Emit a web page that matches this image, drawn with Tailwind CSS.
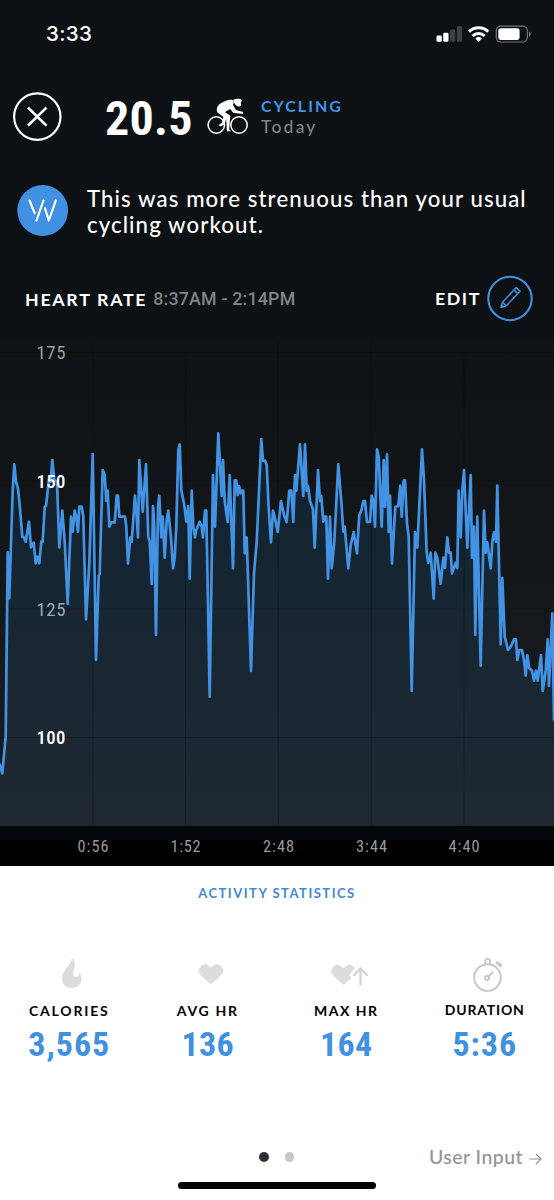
<!DOCTYPE html>
<html lang="en">
<head>
<meta charset="utf-8">
<title>Cycling activity</title>
<script src="https://cdn.jsdelivr.net/npm/@tailwindcss/browser@4"></script>
</head>
<body class="bg-white">
<div class="relative flex h-[1200px] w-[554px] flex-col overflow-hidden font-['Lato',sans-serif]">

  <section class="flex h-[866px] flex-col bg-[#0d1114] text-white">
    <!-- Status bar -->
    <div class="flex h-[67px] items-center justify-between pl-[46px] pr-[23px]">
      <span class="mt-[1px] font-['Inter',sans-serif] text-[20.5px] font-medium leading-none tracking-[0.4px]">3:33</span>
      <svg class="h-[20px] w-[96px]" viewBox="0 0 96 20" fill="#fff">
        <rect x="1.5" y="11.5" width="5.3" height="6.2" rx="1.2"/>
        <rect x="8.2" y="8.8" width="5.3" height="8.9" rx="1.2"/>
        <rect x="15" y="5.6" width="5.3" height="12.1" rx="1.2" fill="#3d4043"/>
        <rect x="21.8" y="2.2" width="5.3" height="15.5" rx="1.2" fill="#3d4043"/>
        <path d="M43.6 17.9l-3.3-3.5a4.8 4.8 0 0 1 6.600 0z"/>
        <path d="M37.600 12a8.600 8.600 0 0 1 12 0M33.900 7.600a14 14 0 0 1 19.400 0" fill="none" stroke="#fff" stroke-width="3"/>
        <rect x="61.300" y="2.200" width="31" height="15.800" rx="4.200" fill="none" stroke="#76797b" stroke-width="1.200"/>
        <rect x="63.300" y="4.200" width="21.300" height="11.800" rx="2.400"/>
        <path d="M94 7.400c2.200.8 2.200 4.600 0 5.400z" fill="#76797b"/>
      </svg>
    </div>

    <!-- Strain score and activity -->
    <div class="flex h-[98px] items-center pl-[13px]">
      <svg class="h-[49px] w-[49px]" viewBox="0 0 49 49" fill="none" stroke="#fff">
        <circle cx="24.300" cy="24.600" r="23.200" stroke-width="2.200"/>
        <path d="M15 15.600l18.500 18M33.500 15.600l-18.500 18" stroke-width="2.700"/>
      </svg>
      <span class="ml-[43px] mt-[5px] w-[88px] font-['Roboto_Condensed',sans-serif] text-[48px] font-bold leading-none tracking-[0.3px]">20.5</span>
      <svg class="ml-[14px] mt-[1px] h-[38px] w-[42px]" viewBox="0 0 42 38" fill="#fff">
        <g fill="none" stroke="#fff" stroke-width="1.500">
          <circle cx="9.300" cy="27" r="8.200"/><circle cx="32" cy="27" r="8.200"/>
        </g>
        <path d="M26 2c3-1.800 7-1.600 8.800.2l-1 3.300.3 2c-.9 1.300-2.600 1.400-3.900.6-1.700-1-3.300-3-4.200-6.100z"/>
        <path d="M25.400 1.900C21.500 1.200 14.500 4 11.400 7.300c-2 2.200-2 5.200-1 7.200l6 4.200-1.300 6.100-3.600 2.500 2.300 1.100 3.800-2.500 2.500-7.300c.3-2-.5-3.400-2.500-4.400l5.600-3.300 3 3.900 9.600 1.300.4-2-7.300-2-3-5.600c1-1.200 1.500-2.600-.5-4.600z"/>
        <path d="M15.500 13l6.700 3.800c1.300 1 1 2.600.8 4l-.8 10.700 1.900 1.800h-4.200l-.7-12.500-4.600-3.300z"/>
      </svg>
      <div class="ml-[12px] flex flex-col">
        <span class="text-[16px] font-bold leading-[21px] tracking-[2px] text-[#4393e4]">CYCLING</span>
        <span class="text-[17.500px] font-medium leading-[21px] tracking-[2.200px] text-[#808386]">Today</span>
      </div>
    </div>

    <!-- Insight -->
    <div class="flex h-[90px] items-center pl-[17px]">
      <svg class="h-[54px] w-[52px]" viewBox="0 0 52 54">
        <circle cx="25.700" cy="27.500" r="25.400" fill="#4191e2"/>
        <path d="M12.500 17.500l5.200 12.500M26.500 17.500l-7 20M28 25.300l3.800 12.200 7-20" fill="none" stroke="#fff" stroke-width="2.200" stroke-linecap="round" stroke-linejoin="round"/>
      </svg>
      <p class="ml-[18px] mt-[3px] w-[460px] text-[22.200px] font-medium leading-[26px] tracking-[1.100px]">This was more strenuous than your usual<br>cycling workout.</p>
    </div>

    <!-- Heart rate heading -->
    <div class="flex h-[86px] items-center pl-[25px] pr-[21px]">
      <span class="mt-[2px] text-[17.800px] font-bold tracking-[1.700px]">HEART RATE</span>
      <span class="ml-[6px] mt-[2px] font-['Roboto',sans-serif] text-[17.800px] font-medium tracking-[0.200px] text-[#808386]">8:37AM - 2:14PM</span>
      <span class="ml-auto mt-[1px] text-[17.800px] font-bold tracking-[1.600px]">EDIT</span>
      <svg class="ml-[6px] h-[48px] w-[46px]" viewBox="0 0 46 48" fill="none" stroke="#4191e2">
        <circle cx="23" cy="24.500" r="21.700" stroke-width="2.100"/>
        <path d="M14 33.500l1.500-5.200L29.200 13.600l3.800 3.600L19.200 31.900zM27 16l3.800 3.600M15.700 28.300l3.500 3.600" stroke-width="1.500" stroke-linejoin="round"/>
        <path d="M13.300 34.300l1.200-4.300 3 3z" fill="#4191e2" stroke="none"/>
      </svg>
    </div>

    <!-- Heart rate chart -->
    <svg class="h-[525px] w-[554px]" viewBox="0 341 554 525">
      <defs>
        <linearGradient id="back" gradientUnits="userSpaceOnUse" x1="0" y1="341" x2="0" y2="740">
          <stop offset="0" stop-color="#0e1215"/><stop offset="1" stop-color="#191b1d"/>
        </linearGradient>
        <linearGradient id="area" gradientUnits="userSpaceOnUse" x1="0" y1="450" x2="0" y2="826">
          <stop offset="0" stop-color="#12212d"/><stop offset=".4" stop-color="#162632"/><stop offset="1" stop-color="#1f2830"/>
        </linearGradient>
      </defs>
      <rect y="341" width="554" height="485" fill="url(#back)"/>
      <path id="fill" fill="url(#area)"/>
      <path d="M93 341V826M185.500 341V826M278.300 341V826M371.300 341V826M464 341V826M0 352.500H554M0 481H554M0 609H554M0 737.500H554" stroke="#05090c" stroke-opacity=".32"/>
      <path id="line" fill="none" stroke="#4393e4" stroke-width="2.700" stroke-linejoin="round" stroke-linecap="round"/>
      <rect y="826" width="554" height="14" fill="#02070a"/>
      <rect y="840" width="554" height="26" fill="#000"/>
      <g font-family="'Roboto Condensed',sans-serif" font-size="18.800" font-weight="400">
        <text x="36.500" y="358.500" textLength="29" fill="#9a9d9e">175</text>
        <text x="36.500" y="487.500" textLength="29" fill="#fff" font-weight="500">150</text>
        <text x="36.500" y="615.500" textLength="29" fill="#a3a9ad">125</text>
        <text x="36.500" y="744" textLength="29" fill="#fff" font-weight="500">100</text>
      </g>
      <g font-family="'Roboto Condensed',sans-serif" font-size="16.300" fill="#9a9a9a">
        <text x="77.500" y="852" textLength="31">0:56</text>
        <text x="170.500" y="852" textLength="30">1:52</text>
        <text x="263" y="852" textLength="31">2:48</text>
        <text x="356" y="852" textLength="31">3:44</text>
        <text x="448.500" y="852" textLength="31">4:40</text>
      </g>
    </svg>
  </section>

  <!-- Statistics -->
  <section class="flex h-[334px] flex-col bg-white">
    <h2 class="mt-[17px] text-center text-[13px] font-bold leading-[20px] tracking-[1.500px] text-[#4488d4]">ACTIVITY STATISTICS</h2>
    <div class="mt-[54px] grid grid-cols-4">
      <div class="flex flex-col items-center">
        <svg class="ml-[5px] h-[36px] w-[40px]" viewBox="0 0 40 36" fill="#dcdcdc">
          <path d="M19.700.8c.8 5.700-7.900 11.400-9.500 18.200-1.400 6.600 3.200 12 9.600 12 5.800 0 9.700-4.400 9.600-9.200-.1-3-1.200-5.600-2-6.800.2 2.700-1 5-3.500 4.800-2.600-.2-3.400-2.800-2.400-5.800C23.200 8.800 24.200 4.200 19.700.8z"/>
        </svg>
        <span class="mt-[8px] text-[14px] font-bold leading-[20px] tracking-[1.800px]">CALORIES</span>
        <span class="mt-[4px] font-['Roboto_Condensed',sans-serif] text-[34px] font-bold leading-[38px] tracking-[1px] text-[#4191e2]">3,565</span>
      </div>
      <div class="flex flex-col items-center">
        <svg class="ml-[6px] h-[36px] w-[40px]" viewBox="0 0 40 36" fill="#dcdcdc">
          <path d="M20 27.300c-4.500-3.600-9-7.700-11.700-11.400-1.200-1.900-.8-3.600.4-5l1.600-2c1.700-1.900 5-2.100 7-.5l2.700 2.300 2.700-2.300c2-1.600 5.300-1.400 7 .5l1.600 2c1.200 1.400 1.600 3.100.4 5C29 19.600 24.500 23.700 20 27.300z"/>
        </svg>
        <span class="mt-[8px] text-[14px] font-bold leading-[20px] tracking-[1.700px]">AVG HR</span>
        <span class="mt-[4px] font-['Roboto_Condensed',sans-serif] text-[34px] font-bold leading-[38px] tracking-[0.300px] text-[#4191e2]">136</span>
      </div>
      <div class="flex flex-col items-center">
        <svg class="ml-[6px] h-[36px] w-[44px]" viewBox="0 0 44 36" fill="#dcdcdc">
          <path d="M16.500 27.800c-4.500-3.600-9-7.700-11.700-11.400-1.200-1.900-.8-3.600.4-5l1.600-2c1.700-1.900 5-2.100 7-.5l2.700 2.300 2.700-2.300c2-1.600 5.300-1.400 7 .5l1.600 2-4 4.300-1.200 3.300 2 1.800C22.500 23 20 25.200 16.500 27.800z"/>
          <path d="M33.500 28.500V11.500M26.300 18.800L33.500 11.300l7.200 7.500" fill="none" stroke="#d2d2d2" stroke-width="2.200"/>
        </svg>
        <span class="mt-[8px] text-[14px] font-bold leading-[20px] tracking-[1.500px]">MAX HR</span>
        <span class="mt-[4px] font-['Roboto_Condensed',sans-serif] text-[34px] font-bold leading-[38px] tracking-[0.300px] text-[#4191e2]">164</span>
      </div>
      <div class="flex flex-col items-center">
        <svg class="ml-[7px] h-[36px] w-[40px]" viewBox="0 0 40 36" fill="none" stroke="#c6c6c6" stroke-width="1.900">
          <circle cx="19.500" cy="20.600" r="13.300"/>
          <path d="M17.300 7.200V4.300a2.400 2.400 0 0 1 4.800 0v2.900"/>
          <circle cx="19" cy="21" r="2"/>
          <path d="M20.500 19.500l4.700-4.800"/>
          <path d="M28.300 5l5.300 4.200" stroke-width="3"/>
        </svg>
        <span class="mt-[7px] text-[14px] font-bold leading-[20px] tracking-[0.800px]">DURATION</span>
        <span class="mt-[5px] font-['Roboto_Condensed',sans-serif] text-[34px] font-bold leading-[38px] tracking-[0.900px] text-[#4191e2]">5:36</span>
      </div>
    </div>

    <!-- Pager -->
    <div class="mt-auto grid grid-cols-3 items-center pr-[12px]">
      <span></span>
      <div class="flex items-center justify-center gap-[16px] pl-[12px]">
        <span class="size-[9.5px] rounded-full bg-[#2a3038]"></span>
        <span class="size-[9.5px] rounded-full bg-[#c6c6c6]"></span>
      </div>
      <div class="flex items-center justify-end gap-[6px] text-[19.400px] font-medium leading-[24px] tracking-[0.500px] text-[#939393]">
        <span>User Input</span>
        <svg class="mt-[3px] h-[12px] w-[13px]" viewBox="0 0 13 12" fill="none" stroke="#939393" stroke-width="1.200"><path d="M.5 6h11.500M7 1l5 5-5 5"/></svg>
      </div>
    </div>
    <div class="mb-[11px] ml-[178px] mt-[13px] h-[7px] w-[198px] rounded-full bg-black"></div>
  </section>
</div>
<script>
  // Heart rate trace: each segment has its left edge in px and x,y samples in thirds of a px below y = 420.
  const segments = [
    [0, "0,1035 7,1060 17,950 23,397 28,535 38,210 43,133 48,185 54,205 60,265 67,350 71,352 77,365 87,305 93,382 101,368 107,430 112,410 118,430 124,365 128,365 134,260 138,258 146,185 152,185 157,120 163,180 171,185 178,382 187,272 194,365 203,552 213,290 218,335 224,272 229,290 234,335 238,260 245,260 250,290 258,598 268,430 278,102 288,720 296,468 299,462 304,290 308,150 314,165 319,243 323,212 328,320 334,307 344,307 350,227 354,227 358,290 375,290 379,320 384,430 391,352 395,365 405,227 410,290 414,352 418,120"],
    [140, "8,275 18,133 25,350 29,365 35,492 39,258 43,320 48,645 54,260 58,227 64,352 68,290 74,413 80,300 85,272 93,352 99,445 104,413 109,320 115,90 119,73 124,210 133,255 139,305 145,258 149,476 155,212 160,320 165,352 169,330 179,305 185,320 189,352 195,272 199,272 209,830 219,165 225,320 235,40 245,228 249,120 254,243 263,306 269,165 279,445 284,181 289,181 293,225 297,198 302,220 306,212 310,212 314,400 320,352 333,753 342,460 350,365 355,260 364,57 369,122 375,122 380,135 386,265 393,367 399,272 404,290 413,336"],
    [280, "3,243 12,285 20,306 28,212 34,212 40,306 45,165 49,212 60,73 70,228 75,73 80,212 84,198 90,243 99,268 104,383 114,150 120,243 124,228 130,305 134,290 139,290 144,476 150,290 155,445 163,365 175,133 185,260 190,335 194,320 205,445 212,375 221,336 231,400 238,285 244,272 250,243 255,243 261,306 270,306 275,227 280,240 285,320 291,88 296,110 305,320 311,120 315,260 321,103 326,336 330,227 336,430 346,260 355,258 361,197 365,290 371,181 375,181 381,310 386,350 395,813"],
    [414, "3,336 10,383 24,88 30,180 38,400 43,428 50,398 59,536 64,398 70,413 80,491 88,413 93,444 100,352 105,398 110,398 114,460 125,428 130,444 134,212 140,352 145,212 150,150 160,383 170,165 174,413 180,320 184,645 190,290 200,737 210,272 215,398 220,367 230,445 235,367 240,336 246,365 250,197 260,673 265,474 272,650 282,690 290,680 300,658 306,658 310,720 316,690 324,690 330,720 335,767 340,705 346,745 354,752 360,782 366,752 371,782 381,705 386,813 395,752 401,658 405,798 415,580 420,900"]
  ];
  const points = segments.flatMap(([left, samples]) => samples.split(" ").map(s => {
    const [x, y] = s.split(",").map(Number);
    return (left + x / 3).toFixed(1) + " " + (420 + y / 3).toFixed(1);
  }));
  document.getElementById("line").setAttribute("d", "M" + points.join("L"));
  document.getElementById("fill").setAttribute("d", "M0 826L" + points.join("L") + "L554 826Z");
</script>
</body>
</html>
